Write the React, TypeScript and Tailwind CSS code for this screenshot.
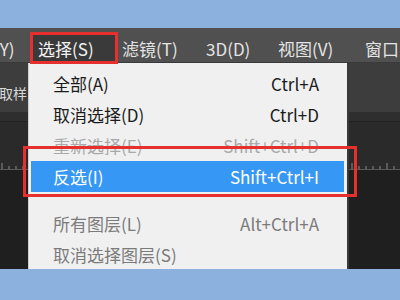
import React from "react";

const font = { fontFamily: '"Noto Sans CJK SC", "Noto Sans", sans-serif' };

type Item = { label: string; keys?: string; tone: "on" | "off" | "dim" | "active" };

const groupA: Item[] = [
  { label: "全部(A)", keys: "Ctrl+A", tone: "on" },
  { label: "取消选择(D)", keys: "Ctrl+D", tone: "on" },
  { label: "重新选择(E)", keys: "Shift+Ctrl+D", tone: "off" },
  { label: "反选(I)", keys: "Shift+Ctrl+I", tone: "active" },
];

const groupB: Item[] = [
  { label: "所有图层(L)", keys: "Alt+Ctrl+A", tone: "dim" },
  { label: "取消选择图层(S)", tone: "dim" },
];

function Ruler() {
  const ticks = Array.from({ length: 58 }, (_, i) => i * 7 + 2);
  return (
    <svg width="400" height="8" className="block">
      {ticks.map((x, i) => (
        <line key={x} x1={x} x2={x} y1={i % 5 === 0 ? 1 : 4} y2={8} stroke="#8a8a8a" strokeWidth="1" />
      ))}
      <line x1="0" x2="400" y1="7.5" y2="7.5" stroke="#5a5a5a" />
    </svg>
  );
}

function MenuRow({ item }: { item: Item }) {
  const tone = {
    on: "text-[#1b1b1b]",
    off: "text-[#a9a9a9]",
    dim: "text-[#7b7b7b]",
    active: "bg-[#3797f4] text-white",
  }[item.tone];
  return (
    <div className={`h-[31px] ml-[2px] mr-[3px] pl-[22px] pr-[25px] flex items-center justify-between whitespace-nowrap ${tone}`}>
      <span>{item.label}</span>
      {item.keys && <span>{item.keys}</span>}
    </div>
  );
}

export default function App() {
  return (
    <div className="relative w-[400px] h-[300px] overflow-hidden flex flex-col bg-[#8cb1de] text-[17px] leading-none" style={font}>
      <div className="h-[28px] shrink-0" />

      {/* menu bar */}
      <div className="h-[35px] shrink-0 bg-[#505050] border-b border-[#3a3a3a] flex items-start pt-[4px] text-[#e4e4e4] whitespace-nowrap">
        <span className="w-[36px] h-[32px] -ml-[6px] shrink-0 flex items-center">(Y)</span>
        <span className="relative z-10 w-[88px] h-[32px] shrink-0 flex items-center pl-[5px] border-[3px] border-[#e5302e] bg-[#3a3a3a] text-[#f2f2f2]">
          选择(S)
        </span>
        <span className="w-[84px] h-[32px] ml-[4px] shrink-0 flex items-center">滤镜(T)</span>
        <span className="w-[72px] h-[32px] shrink-0 flex items-center">3D(D)</span>
        <span className="w-[87px] h-[32px] shrink-0 flex items-center">视图(V)</span>
        <span className="h-[32px] shrink-0 flex items-center">窗口(W)</span>
      </div>

      {/* options bar */}
      <div className="h-[49px] shrink-0 bg-[#3d3d3d] flex items-end pb-[12px] text-[#d8d8d8] text-[14px]">
        <span className="-ml-[1px]">取样</span>
      </div>

      {/* document area */}
      <div className="h-[157px] shrink-0 flex flex-col bg-[#1f1f1f]">
        <div className="h-[10px] bg-[#2e2e2e] border-b border-[#222]" />
        <div className="h-[48px] bg-[#2a2a2a] flex items-end">
          <Ruler />
        </div>
        <div className="flex-1 bg-[#1f1f1f]" />
      </div>

      <div className="flex-1" />

      {/* dropdown */}
      <div className="absolute left-[28px] top-[63px] w-[321px] h-[206px] bg-[#f0f0f0] border-l border-[#cfcfcf] border-r-[2px] border-r-[#3a3a3a] pt-[5px]">
        {groupA.map((it) => (
          <MenuRow key={it.label} item={it} />
        ))}
        <div className="h-[16px]" />
        {groupB.map((it) => (
          <MenuRow key={it.label} item={it} />
        ))}
      </div>

      {/* annotation box */}
      <div className="absolute left-[23px] top-[146px] w-[334px] h-[51px] border-[3px] border-[#e5302e]" />
    </div>
  );
}
